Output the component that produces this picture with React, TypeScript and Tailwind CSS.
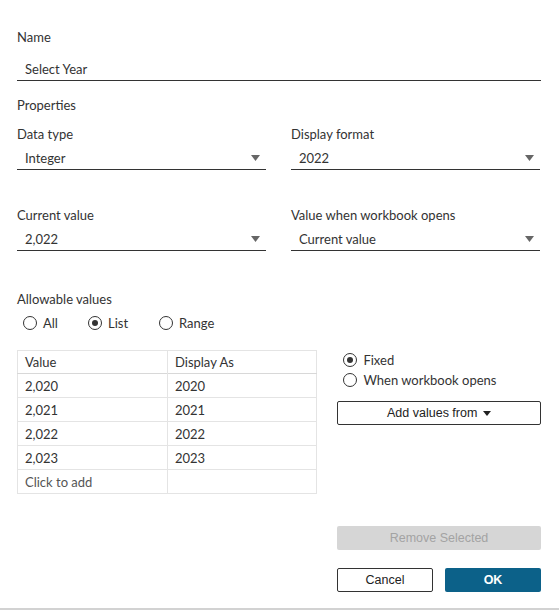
import React from "react";

const Caret = () => (
  <svg width="9" height="6" viewBox="0 0 9 6" className="shrink-0">
    <path d="M0 0 L9 0 L4.5 6 Z" fill="#666" />
  </svg>
);

const Radio = ({ checked }: { checked?: boolean }) => (
  <span className="flex h-[14px] w-[14px] shrink-0 items-center justify-center rounded-full border border-[#333]">
    {checked && <span className="h-[6px] w-[6px] rounded-full bg-[#333]" />}
  </span>
);

const Select = ({ value }: { value: string }) => (
  <div className="mt-[4px] flex h-[24px] items-center justify-between border-b border-[#333] pl-[8px] pr-[6px]">
    <span>{value}</span>
    <Caret />
  </div>
);

const rows = [
  ["2,020", "2020"],
  ["2,021", "2021"],
  ["2,022", "2022"],
  ["2,023", "2023"],
];

export default function App() {
  return (
    <div
      className="flex h-[611px] w-[559px] flex-col bg-white text-[13px] leading-[16px] text-[#333]"
      style={{ fontFamily: "Lato, 'Noto Sans', sans-serif" }}
    >
      <div className="flex-1 pl-[17px] pr-[18px] pt-[29px]">
        <div>Name</div>
        <div className="mt-[13px] flex h-[23px] items-center border-b border-[#333] pl-[8px]">Select Year</div>
        <div className="mt-[16px]">Properties</div>

        <div className="mt-[13px] flex gap-[25px]">
          <div className="w-[249px]">
            <div>Data type</div>
            <Select value="Integer" />
          </div>
          <div className="w-[249px]">
            <div>Display format</div>
            <Select value="2022" />
          </div>
        </div>

        <div className="mt-[37px] flex gap-[25px]">
          <div className="w-[249px]">
            <div>Current value</div>
            <Select value="2,022" />
          </div>
          <div className="w-[249px]">
            <div>Value when workbook opens</div>
            <Select value="Current value" />
          </div>
        </div>

        <div className="mt-[40px]">Allowable values</div>
        <div className="mt-[8px] flex items-center pl-[6px]">
          <label className="flex w-[65px] items-center gap-[6px]">
            <Radio /> All
          </label>
          <label className="flex w-[71px] items-center gap-[6px]">
            <Radio checked /> List
          </label>
          <label className="flex items-center gap-[6px]">
            <Radio /> Range
          </label>
        </div>

        <div className="mt-[19px] flex gap-[20px]">
          <table className="w-[301px] border-collapse border border-[#e4e4e4] text-left">
            <thead>
              <tr className="h-[23px] border-b border-[#d8d8d8]">
                <th className="w-[150px] border-r border-[#e4e4e4] pl-[7px] font-normal">Value</th>
                <th className="pl-[7px] font-normal">Display As</th>
              </tr>
            </thead>
            <tbody>
              {rows.map(([v, d]) => (
                <tr key={v} className="h-[24px] border-b border-[#e4e4e4]">
                  <td className="border-r border-[#e4e4e4] pl-[7px]">{v}</td>
                  <td className="pl-[7px]">{d}</td>
                </tr>
              ))}
              <tr className="h-[24px]">
                <td className="border-r border-[#e4e4e4] pl-[7px] text-[#555]">Click to add</td>
                <td />
              </tr>
            </tbody>
          </table>

          <div className="flex w-[204px] flex-col">
            <label className="mt-[2px] flex items-center gap-[6px] pl-[6px]">
              <Radio checked /> Fixed
            </label>
            <label className="mt-[4px] flex items-center gap-[6px] pl-[6px]">
              <Radio /> When workbook opens
            </label>
            <button
              className="mt-[13px] flex h-[24px] items-center justify-center gap-[6px] rounded-[2px] border border-[#333] bg-white text-[12.5px] text-[#222]"
              style={{ fontFamily: "'Liberation Sans', Arial, sans-serif" }}
            >
              Add values from
              <svg width="8" height="5" viewBox="0 0 8 5">
                <path d="M0 0 L8 0 L4 5 Z" fill="#222" />
              </svg>
            </button>
          </div>
        </div>

        <div className="mt-[32px] flex justify-end" style={{ fontFamily: "'Liberation Sans', Arial, sans-serif" }}>
          <div className="flex w-[204px] flex-col">
            <button className="h-[24px] rounded-[2px] bg-[#d6d6d6] text-[12.5px] text-[#a3a3a3]">Remove Selected</button>
            <div className="mt-[18px] flex justify-between">
              <button className="h-[24px] w-[96px] rounded-[2px] border border-[#333] bg-white text-[12.5px] text-[#222]">
                Cancel
              </button>
              <button className="h-[24px] w-[96px] rounded-[2px] bg-[#0c6189] text-[12.5px] font-bold text-white">
                OK
              </button>
            </div>
          </div>
        </div>
      </div>
      <div className="mb-[1px] h-[2px] bg-[#d2d2d2]" />
    </div>
  );
}
